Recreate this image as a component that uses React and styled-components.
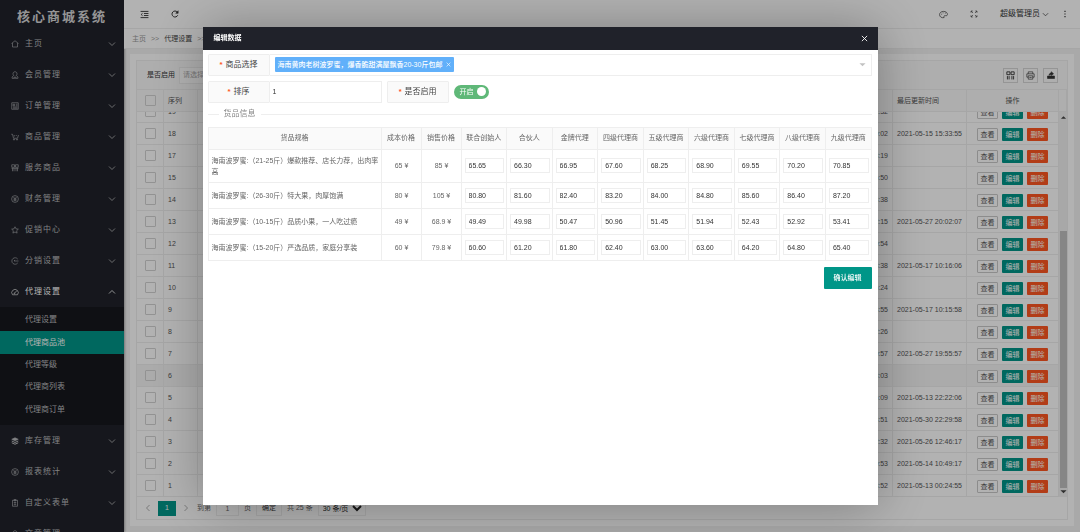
import React from "react";
import styled, { createGlobalStyle, css } from "styled-components";

const teal = "#009688";
const line = "#eeeeee";
const sans = '"Liberation Sans", "Noto Sans CJK SC", sans-serif';

const GlobalStyle = createGlobalStyle`
  *, *::before, *::after { box-sizing: border-box; }
  body { margin: 0; background: #f2f2f2; color: #555; font: 7px/10px ${sans}; overflow: hidden; }
  button, input, select { font: inherit; color: inherit; margin: 0; padding: 0; border: 0; background: none; border-radius: 0; }
  a { color: inherit; text-decoration: none; }
  ul, ol { list-style: none; margin: 0; padding: 0; }
  h1, h2 { margin: 0; }
  table { border-collapse: separate; border-spacing: 0; table-layout: fixed; width: 100%; }
  th, td { padding: 0; font-weight: 400; }
  fieldset { margin: 0; padding: 0; min-width: 0; border: 0; }
`;

/* ---------- icons ---------- */

const Svg = styled.svg`
  display: block;
  flex: none;
  width: ${(p) => p.$size || 8}px;
  height: ${(p) => p.$size || 8}px;
  fill: none;
  stroke: currentColor;
  stroke-width: 1.2;
`;

const shapes = {
  home: <path d="M1 7 8 1.500 15 7M3 6v8h10V6" />,
  user: <path d="M8 1.500c-2.400 0-4 1.700-4 4 0 1.500.500 2.700 1.500 3.500C3.500 10 2 11.500 2 14.500h12c0-3-1.500-4.500-3.500-5.500 1-.800 1.500-2 1.500-3.500 0-2.300-1.600-4-4-4zM5 14.500c.500-1.700 1.500-2.500 3-2.500s2.500.800 3 2.500" />,
  order: <path d="M1.500 1.500h13v13h-13zM4 4.500h3.500v3H4zM10 4.500h3M10 7.500h3M4 10h9M4 12.300h9" />,
  cart: <><path d="M.500 2.500H3l2 8h8l2-6.500M6.500 4v3M9.500 5h2" /><circle cx="6" cy="13.200" r="1.100" /><circle cx="12" cy="13.200" r="1.100" /></>,
  service: <path d="M1.500 1.500h5.500v5H1.500zM9 1.500h5.500v5H9zM1 8.500h14M3 8.500v6M6 8.500v6M10 8.500v6M13 8.500v6" />,
  yen: <><circle cx="8" cy="8" r="6.800" /><path d="m5 4 3 3.700L11 4M8 7.700V12.500M5 8h6M5 10.300h6" /></>,
  star: <path d="m8 1.500 2 4.200 4.700.600-3.400 3.200.900 4.700L8 12l-4.200 2.200.900-4.700L1.300 6.300 6 5.700z" />,
  split: <path d="M13.500 4.200A6.500 6.500 0 1 0 13.500 11.800M6 8h9M6 8l2-2" />,
  gauge: <path d="M3 13.500A6.500 6.500 0 1 1 13 13.500zM7 10.500l4.500-5M8 10.500a1 1 0 1 1-1-1" />,
  stack: <><path fill="currentColor" d="m8 1.500 6.500 3L8 7.700 1.500 4.500z" /><path strokeWidth="2" d="m1.500 8 6.500 3 6.500-3M1.500 11.500l6.500 3 6.500-3" /></>,
  form: <path d="M3 2.500h10v12H3zM6 1.200h4v2.500H6zM5.500 7h5M8 7v4.500M5.500 11.500h5" />,
  chevronDown: <path strokeWidth="1.600" d="m2 5 6 6 6-6" />,
  chevronUp: <path strokeWidth="1.600" d="m2 11 6-6 6 6" />,
  chevronLeft: <path strokeWidth="1.600" d="m11 2-6 6 6 6" />,
  chevronRight: <path strokeWidth="1.600" d="m5 2 6 6-6 6" />,
  collapse: <path strokeWidth="1.600" d="M1 2.500h14M7 6.200h8M7 9.800h8M1 13.500h14M4.500 6 2 8l2.500 2" />,
  refresh: <><path strokeWidth="2" d="M13.500 10.500A6 6 0 1 1 12.500 4" /><path fill="currentColor" d="M14.300 1.500v5H9.500z" /></>,
  palette: <><path d="M9 13.500C4.500 14.500 1 12 1 8.300 1 4.800 4 2.500 8 2.500c4.200 0 7 2.300 7 5.300 0 2-1.500 2.700-3.500 2.200-2-.500-3 .500-2.500 3.500z" /><path d="M4 7.500h1.500M6.500 5H8M10.500 5.500H12" /></>,
  expand: <path d="M2 5.500V2h3.500M2 2l4 4M10.500 2H14v3.500M14 2l-4 4M2 10.500V14h3.500M2 14l4-4M14 10.500V14h-3.500M14 14l-4-4" />,
  more: <path strokeWidth="2.400" d="M8 1.500v2.400M8 6.800v2.400M8 12.100v2.400" />,
  columns: <path d="M1.500 1.500h5.500v5H1.500zM9 1.500h5.500v5H9zM2.500 9v6M5.500 9v6M10.500 9v6M13.500 9v6" strokeWidth="1.600" />,
  print: <path d="M4 5V1.500h8V5M4 11H1.500V5h13v6H12M4 8.500h8v6H4zM6 11.500h4" />,
  export: <><path fill="currentColor" d="M1 10h14v5H1z" /><path fill="currentColor" d="M4 8.500C4.500 5 6.500 4 8.500 4V1.500L13 5.500 8.500 9V7C6.500 7 5 7.500 4 8.500z" /></>,
  close: <path strokeWidth="2" d="m2 2 12 12M14 2 2 14" />,
  caret: <path fill="currentColor" stroke="none" d="M1 5h14l-7 7z" />,
  caretUp: <path fill="currentColor" stroke="none" d="M2 11h12L8 5z" />,
};

const Icon = ({ name, size }) => (
  <Svg viewBox="0 0 16 16" $size={size} aria-hidden="true">{shapes[name]}</Svg>
);

/* ---------- shell ---------- */

const Shell = styled.div`
  display: grid;
  grid-template-columns: 124px minmax(0, 1fr);
  grid-template-rows: minmax(0, 1fr);
  height: 100vh;
`;

const Sidebar = styled.nav`
  background: #20222a;
  color: #b9babd;
  overflow: hidden;
  box-shadow: 1px 0 2px rgba(0, 0, 0, 0.3);
`;

const Logo = styled.h1`
  display: flex;
  align-items: center;
  justify-content: center;
  height: 28px;
  padding-top: 6px;
  color: #d5d5d6;
  font-size: 13px;
  line-height: 16px;
  letter-spacing: 2px;
`;

const MenuButton = styled.button`
  display: flex;
  align-items: center;
  gap: 6px;
  width: 100%;
  height: 31px;
  padding: 0 8px 0 11px;
  font-size: 8px;
  letter-spacing: 1px;
  color: ${(p) => (p.$open ? "#fff" : "inherit")};
`;

const MenuLabel = styled.span`
  flex: 1;
  text-align: left;
`;

const SubMenu = styled.ul`
  display: grid;
  grid-auto-rows: 1fr;
  height: 118px;
  padding: 2px 0 4px;
  background: #16181d;
`;

const SubLink = styled.a`
  display: flex;
  align-items: center;
  height: 100%;
  padding-left: 25px;
  font-size: 8px;
  ${(p) => p.$active && css`background: ${teal}; color: #fff;`}
`;

const Main = styled.div`
  display: flex;
  flex-direction: column;
  min-width: 0;
  min-height: 0;
`;

const TopBar = styled.header`
  flex: none;
  display: flex;
  align-items: center;
  justify-content: space-between;
  height: 29px;
  padding: 0 11px 0 16px;
  background: #fff;
  border-bottom: 1px solid ${line};
  color: #333;
`;

const IconGroup = styled.div`
  display: flex;
  align-items: center;
  gap: 22px;
`;

const IconButton = styled.button`
  display: flex;
  align-items: center;
`;

const UserButton = styled.button`
  display: flex;
  align-items: center;
  gap: 2px;
  margin-right: -10px;
  font-size: 8px;
`;

const Crumbs = styled.ol`
  flex: none;
  display: flex;
  align-items: center;
  gap: 5px;
  height: 20px;
  padding: 0 8px;
  background: #fff;
  border-bottom: 1px solid ${line};
  color: #999;
`;

const Crumb = styled.li`
  color: ${(p) => (p.$strong ? "#444" : "inherit")};
`;

const Content = styled.main`
  flex: 1;
  display: flex;
  min-height: 0;
  padding: 5px 6px 6px;
`;

const Card = styled.section`
  flex: 1;
  display: flex;
  min-width: 0;
  padding: 6px;
  background: #fff;
`;

const Grid = styled.div`
  flex: 1;
  display: flex;
  flex-direction: column;
  min-width: 0;
  border: 1px solid ${line};
`;

const Toolbar = styled.div`
  flex: none;
  display: flex;
  align-items: center;
  justify-content: space-between;
  height: 29px;
  padding: 0 9px 0 10px;
  background: #fafafa;
  border-bottom: 1px solid ${line};
`;

const Filter = styled.label`
  display: flex;
  align-items: center;
  gap: 4px;
  color: #333;
`;

const FilterSelect = styled.select`
  width: 90px;
  height: 17px;
  padding: 0 3px;
  appearance: none;
  background: #fff;
  border: 1px solid ${line};
  color: #aaa;
`;

const Tools = styled.div`
  display: flex;
  gap: 5px;
`;

const ToolButton = styled.button`
  display: grid;
  place-items: center;
  width: 15px;
  height: 15px;
  border: 1px solid #d6d6d6;
  color: #333;
`;

const Cell = styled.td`
  height: 22px;
  padding: 0 4px;
  border-right: 1px solid ${line};
  border-bottom: 1px solid ${line};
  text-align: ${(p) => p.$align || "left"};
  white-space: nowrap;
`;

const HeadTable = styled.table`
  flex: none;
  background: #fafafa;
`;

const Row = styled.tr`
  background: ${(p) => (p.$hover ? "#f5f5f5" : "#fff")};
`;

const Tick = styled.input`
  display: block;
  width: 11px;
  height: 11px;
  margin: 0 auto;
  appearance: none;
  border: 1px solid #d2d2d2;
  border-radius: 1px;
`;

const BodyArea = styled.div`
  flex: 1;
  display: flex;
  min-height: 0;
`;

const BodyView = styled.div`
  flex: 1;
  display: flex;
  flex-direction: column;
  justify-content: flex-end;
  min-width: 0;
  overflow: hidden;
`;

const BodyTable = styled.table`
  flex: none;
`;

const Actions = styled.div`
  display: flex;
  gap: 4px;
  padding: 2px 0 0 6px;
`;

const variants = {
  plain: css`background: #fff; border: 1px solid #c9c9c9; color: #555;`,
  primary: css`background: ${teal}; color: #fff;`,
  danger: css`background: #ff5722; color: #fff;`,
};

const RowButton = styled.button`
  width: 21px;
  height: 13px;
  border-radius: 1px;
  line-height: 11px;
  ${(p) => variants[p.$kind]}
`;

const ScrollBar = styled.div`
  display: flex;
  flex-direction: column;
  align-items: center;
  width: 8px;
  background: #f1f1f1;
  color: #444;
  padding: 2px 0;
`;

const Track = styled.div`
  flex: 1;
  display: flex;
  flex-direction: column;
  justify-content: flex-end;
`;

const Thumb = styled.div`
  width: 7px;
  height: 70%;
  background: #c1c1c1;
`;

const Pager = styled.div`
  flex: none;
  display: flex;
  align-items: center;
  gap: 5px;
  height: 22px;
  padding: 0 7px;
  color: #666;
`;

const PageButton = styled.button`
  display: grid;
  place-items: center;
  width: ${(p) => (p.$current ? 18 : 8)}px;
  height: 15px;
  margin: 0 ${(p) => (p.$current ? 1 : 0)}px;
  ${(p) => (p.$current ? css`background: ${teal}; color: #fff;` : css`color: #999;`)}
`;

const PageLabel = styled.label`
  display: flex;
  align-items: center;
  gap: 5px;
  margin-left: 2px;
`;

const PageInput = styled.input`
  width: 23px;
  height: 15px;
  border: 1px solid ${line};
  text-align: center;
`;

const PageGo = styled.button`
  width: 26px;
  height: 15px;
  border: 1px solid ${line};
  color: #333;
`;

const PageSize = styled.select`
  width: 48px;
  height: 15px;
  border: 1px solid ${line};
  color: #222;
`;

/* ---------- dialog ---------- */

const Shade = styled.div`
  position: fixed;
  inset: 0;
  display: flex;
  align-items: center;
  justify-content: center;
  background: rgba(0, 0, 0, 0.3);
`;

const Dialog = styled.section`
  width: 62.5%;
  height: 90%;
  background: #fff;
  box-shadow: 1px 1px 50px rgba(0, 0, 0, 0.3);
  overflow: hidden;
`;

const DialogHead = styled.header`
  display: flex;
  align-items: center;
  justify-content: space-between;
  height: 23px;
  padding: 0 10px 0 11px;
  background: #20222a;
  color: #fff;
`;

const DialogTitle = styled.h2`
  font-size: 7px;
  font-weight: 700;
`;

const DialogForm = styled.form`
  padding: 4px 6px 6px 5px;
`;

const FormRow = styled.div`
  display: flex;
  height: 22px;
  margin-bottom: 5px;
`;

const FieldLabel = styled.label`
  display: flex;
  align-items: center;
  justify-content: center;
  gap: 3px;
  width: 62px;
  background: #fafafa;
  border: 1px solid ${line};
  border-radius: 1px;
  font-size: 8px;
  color: #444;

  &::before { content: "*"; color: #ff5722; font-weight: 700; }
`;

const TagBox = styled.div`
  flex: 1;
  display: flex;
  align-items: center;
  justify-content: space-between;
  padding: 0 5px;
  border: 1px solid ${line};
  border-left: 0;
  color: #c2c2c2;
`;

const Tag = styled.span`
  display: flex;
  align-items: center;
  gap: 4px;
  height: 15px;
  padding: 0 3px;
  background: #61b0fa;
  border-radius: 1px;
  color: #fff;
  font-weight: 500;
`;

const SortInput = styled.input`
  width: 112px;
  margin-right: 5px;
  padding: 0 3px;
  border: 1px solid ${line};
  border-left: 0;
  color: #333;
`;

const Switch = styled.label`
  position: relative;
  display: flex;
  align-items: center;
  justify-content: space-between;
  align-self: center;
  width: 35px;
  height: 14px;
  margin-left: 5px;
  padding: 0 3px 0 6px;
  border-radius: 7px;
  background: #5fb878;
  color: #fff;

  &::after { content: ""; width: 9px; height: 9px; border-radius: 50%; background: #fff; }
`;

const SwitchInput = styled.input`
  position: absolute;
  inset: 0;
  opacity: 0;
`;

const Legend = styled.div`
  display: flex;
  align-items: center;
  gap: 5px;
  height: 13px;
  margin-bottom: 6px;
  color: #888;
  font-size: 8px;

  &::before { content: ""; width: 11px; height: 1px; background: ${line}; }
  &::after { content: ""; flex: 1; height: 1px; background: ${line}; }
`;

const PriceTable = styled.table`
  border-top: 1px solid ${line};
  border-left: 1px solid ${line};
`;

const PriceHead = styled.th`
  height: 22px;
  background: #fafafa;
  border-right: 1px solid ${line};
  border-bottom: 1px solid ${line};
  color: #666;
  white-space: nowrap;
`;

const PriceCell = styled.td`
  height: 26px;
  padding: 0 2px 0 3px;
  border-right: 1px solid ${line};
  border-bottom: 1px solid ${line};
  color: #666;
  line-height: 11px;
  text-align: ${(p) => p.$align || "left"};
`;

const PriceRow = styled.tr`
  height: ${(p) => (p.$tall ? 33 : 26)}px;
`;

const PriceInput = styled.input`
  display: block;
  width: 100%;
  height: 15px;
  padding: 0 3px;
  border: 1px solid ${line};
  color: #333;
`;

const Submit = styled.button`
  display: block;
  width: 48px;
  height: 22px;
  margin: 6px 0 0 auto;
  background: ${teal};
  border-radius: 1px;
  color: #fff;
  font-weight: 500;
`;

/* ---------- data ---------- */

const menuTop = [
  ["home", "主页"],
  ["user", "会员管理"],
  ["order", "订单管理"],
  ["cart", "商品管理"],
  ["service", "服务商品"],
  ["yen", "财务管理"],
  ["star", "促销中心"],
  ["split", "分销设置"],
];
const subItems = ["代理设置", "代理商品池", "代理等级", "代理商列表", "代理商订单"];
const menuBottom = [
  ["stack", "库存管理"],
  ["yen", "报表统计"],
  ["form", "自定义表单"],
  ["user", "文章管理"],
];

const records = [
  [19, "2021-05-26 10:12:32", ""],
  [18, "2021-05-13 10:20:02", "2021-05-15 15:33:55"],
  [17, "2021-05-13 10:18:19", ""],
  [15, "2021-05-13 10:16:50", ""],
  [14, "2021-05-13 10:14:38", ""],
  [13, "2021-05-13 10:12:15", "2021-05-27 20:02:07"],
  [12, "2021-05-13 10:10:54", ""],
  [11, "2021-05-13 10:08:38", "2021-05-17 10:16:06"],
  [10, "2021-05-13 10:06:24", ""],
  [9, "2021-05-13 10:04:55", "2021-05-17 10:15:58"],
  [8, "2021-05-13 10:02:26", ""],
  [7, "2021-05-12 17:40:57", "2021-05-27 19:55:57"],
  [6, "2021-05-12 17:38:03", ""],
  [5, "2021-05-12 17:36:09", "2021-05-13 22:22:06"],
  [4, "2021-05-12 17:34:51", "2021-05-30 22:29:58"],
  [3, "2021-05-12 17:32:32", "2021-05-26 12:46:17"],
  [2, "2021-05-12 17:30:53", "2021-05-14 10:49:17"],
  [1, "2021-05-12 17:28:52", "2021-05-13 00:24:55"],
];

const levels = ["联合创始人", "合伙人", "金牌代理", "四级代理商", "五级代理商", "六级代理商", "七级代理商", "八级代理商", "九级代理商"];
const goods = [
  { name: "海南波罗蜜:（21-25斤）爆款推荐、店长力荐，出肉率高", cost: "65", sale: "85", prices: ["65.65", "66.30", "66.95", "67.60", "68.25", "68.90", "69.55", "70.20", "70.85"], tall: true },
  { name: "海南波罗蜜:（26-30斤）特大果，肉厚饱满", cost: "80", sale: "105", prices: ["80.80", "81.60", "82.40", "83.20", "84.00", "84.80", "85.60", "86.40", "87.20"] },
  { name: "海南波罗蜜:（10-15斤）品质小果，一人吃过瘾", cost: "49", sale: "68.9", prices: ["49.49", "49.98", "50.47", "50.96", "51.45", "51.94", "52.43", "52.92", "53.41"] },
  { name: "海南波罗蜜:（15-20斤）严选品质，家庭分享装", cost: "60", sale: "79.8", prices: ["60.60", "61.20", "61.80", "62.40", "63.00", "63.60", "64.20", "64.80", "65.40"] },
];

/* ---------- parts ---------- */

const MenuItem = ({ icon, label, open }) => (
  <MenuButton type="button" $open={open} aria-expanded={!!open}>
    <Icon name={icon} />
    <MenuLabel>{label}</MenuLabel>
    <Icon name={open ? "chevronUp" : "chevronDown"} />
  </MenuButton>
);

const Columns = ({ gutter }) => (
  <colgroup>
    <col width="27" />
    <col width="34" />
    <col />
    <col width="74" />
    <col width="74" />
    <col width="92" />
    {gutter && <col width="8" />}
  </colgroup>
);

const RecordGrid = () => (
  <Grid>
    <Toolbar>
      <Filter>
        是否启用
        <FilterSelect defaultValue=""><option value="">请选择</option></FilterSelect>
      </Filter>
      <Tools>
        <ToolButton type="button" aria-label="筛选列"><Icon name="columns" size={9} /></ToolButton>
        <ToolButton type="button" aria-label="打印"><Icon name="print" size={9} /></ToolButton>
        <ToolButton type="button" aria-label="导出"><Icon name="export" /></ToolButton>
      </Tools>
    </Toolbar>
    <HeadTable>
      <Columns gutter />
      <thead>
        <tr>
          <Cell as="th"><Tick type="checkbox" aria-label="全选" /></Cell>
          <Cell as="th">序列</Cell>
          <Cell as="th" />
          <Cell as="th" />
          <Cell as="th">最后更新时间</Cell>
          <Cell as="th" $align="center">操作</Cell>
          <Cell as="th" />
        </tr>
      </thead>
    </HeadTable>
    <BodyArea>
      <BodyView>
        <BodyTable>
          <Columns />
          <tbody>
            {records.map(([id, created, updated]) => (
              <Row key={id} $hover={id === 6}>
                <Cell><Tick type="checkbox" aria-label={`选择 ${id}`} /></Cell>
                <Cell>{id}</Cell>
                <Cell />
                <Cell>{created}</Cell>
                <Cell>{updated}</Cell>
                <Cell>
                  <Actions>
                    <RowButton type="button" $kind="plain">查看</RowButton>
                    <RowButton type="button" $kind="primary">编辑</RowButton>
                    <RowButton type="button" $kind="danger">删除</RowButton>
                  </Actions>
                </Cell>
              </Row>
            ))}
          </tbody>
        </BodyTable>
      </BodyView>
      <ScrollBar>
        <Icon name="caretUp" size={7} />
        <Track><Thumb /></Track>
        <Icon name="caret" size={7} />
      </ScrollBar>
    </BodyArea>
    <Pager>
      <PageButton type="button" aria-label="上一页"><Icon name="chevronLeft" /></PageButton>
      <PageButton type="button" $current>1</PageButton>
      <PageButton type="button" aria-label="下一页"><Icon name="chevronRight" /></PageButton>
      <PageLabel>到第<PageInput defaultValue="1" />页</PageLabel>
      <PageGo type="button">确定</PageGo>
      <span>共 25 条</span>
      <PageSize aria-label="每页条数"><option>30 条/页</option></PageSize>
    </Pager>
  </Grid>
);

const EditDialog = () => (
  <Dialog role="dialog" aria-labelledby="dialog-title">
    <DialogHead>
      <DialogTitle id="dialog-title">编辑数据</DialogTitle>
      <IconButton type="button" aria-label="关闭"><Icon name="close" size={7} /></IconButton>
    </DialogHead>
    <DialogForm>
      <FormRow>
        <FieldLabel as="span" id="goods-label">商品选择</FieldLabel>
        <TagBox role="combobox" aria-labelledby="goods-label" aria-expanded="false" tabIndex={0}>
          <Tag>
            海南黄肉老树波罗蜜，爆香脆甜满屋飘香20-30斤包邮
            <IconButton type="button" aria-label="移除"><Icon name="close" size={5} /></IconButton>
          </Tag>
          <Icon name="caret" size={7} />
        </TagBox>
      </FormRow>
      <FormRow>
        <FieldLabel htmlFor="sort">排序</FieldLabel>
        <SortInput id="sort" defaultValue="1" />
        <FieldLabel htmlFor="enabled">是否启用</FieldLabel>
        <Switch>
          <SwitchInput id="enabled" type="checkbox" role="switch" defaultChecked />
          开启
        </Switch>
      </FormRow>
      <fieldset aria-labelledby="goods-info">
        <Legend><span id="goods-info">货品信息</span></Legend>
        <PriceTable>
          <colgroup>
            <col width="173" />
            <col width="40" />
            <col width="40" />
            {levels.map((l) => <col key={l} />)}
          </colgroup>
          <thead>
            <tr>
              {["货品规格", "成本价格", "销售价格", ...levels].map((h) => <PriceHead key={h}>{h}</PriceHead>)}
            </tr>
          </thead>
          <tbody>
            {goods.map((g) => (
              <PriceRow key={g.name} $tall={g.tall}>
                <PriceCell>{g.name}</PriceCell>
                <PriceCell $align="center">{g.cost} ¥</PriceCell>
                <PriceCell $align="center">{g.sale} ¥</PriceCell>
                {g.prices.map((p, i) => (
                  <PriceCell key={levels[i]}><PriceInput defaultValue={p} aria-label={levels[i]} /></PriceCell>
                ))}
              </PriceRow>
            ))}
          </tbody>
        </PriceTable>
      </fieldset>
      <Submit type="button">确认编辑</Submit>
    </DialogForm>
  </Dialog>
);

export default function App() {
  return (
    <>
      <GlobalStyle />
      <Shell>
        <Sidebar>
          <Logo>核心商城系统</Logo>
          {menuTop.map(([icon, label]) => <MenuItem key={label} icon={icon} label={label} />)}
          <MenuItem icon="gauge" label="代理设置" open />
          <SubMenu>
            {subItems.map((s) => (
              <li key={s}><SubLink href="#" $active={s === "代理商品池"}>{s}</SubLink></li>
            ))}
          </SubMenu>
          {menuBottom.map(([icon, label]) => <MenuItem key={label} icon={icon} label={label} />)}
        </Sidebar>
        <Main>
          <TopBar>
            <IconGroup>
              <IconButton type="button" aria-label="收起菜单"><Icon name="collapse" size={9} /></IconButton>
              <IconButton type="button" aria-label="刷新"><Icon name="refresh" /></IconButton>
            </IconGroup>
            <IconGroup>
              <IconButton type="button" aria-label="主题"><Icon name="palette" size={9} /></IconButton>
              <IconButton type="button" aria-label="全屏"><Icon name="expand" /></IconButton>
              <UserButton type="button">超级管理员<Icon name="chevronDown" size={7} /></UserButton>
              <IconButton type="button" aria-label="更多"><Icon name="more" /></IconButton>
            </IconGroup>
          </TopBar>
          <Crumbs>
            <Crumb><a href="#">主页</a></Crumb>
            <Crumb>&gt;&gt;</Crumb>
            <Crumb $strong><a href="#">代理设置</a></Crumb>
            <Crumb>&gt;&gt;</Crumb>
          </Crumbs>
          <Content>
            <Card><RecordGrid /></Card>
          </Content>
        </Main>
      </Shell>
      <Shade><EditDialog /></Shade>
    </>
  );
}
